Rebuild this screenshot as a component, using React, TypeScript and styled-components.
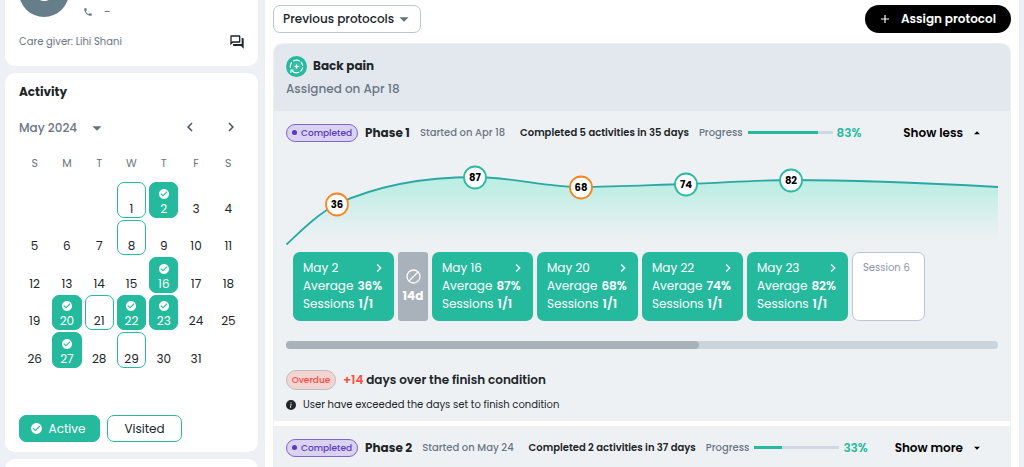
import React from "react";
import styled, { createGlobalStyle } from "styled-components";
import {
  MdAdd,
  MdArrowDropDown,
  MdArrowDropUp,
  MdCheckCircle,
  MdChevronLeft,
  MdChevronRight,
  MdOutlineForum,
  MdPhone,
} from "react-icons/md";
import { BsInfoCircleFill } from "react-icons/bs";

const color = {
  page: "#edf1f5",
  panel: "#edf1f4",
  header: "#e3e8ef",
  green: "#25b99e",
  text: "#212529",
  muted: "#6b7583",
  purple: "#5b36c9",
};

const GlobalStyle = createGlobalStyle`
  *, *::before, *::after { box-sizing: border-box; }
  body {
    margin: 0;
    background: ${color.page};
    color: ${color.text};
    font-family: Poppins, Inter, "Open Sans", sans-serif;
    font-size: 12px;
    line-height: 18px;
  }
  h2, h3, p { margin: 0; }
  button, select {
    margin: 0;
    padding: 0;
    border: 0;
    background: none;
    color: inherit;
    font: inherit;
    cursor: pointer;
  }
  svg { display: block; flex: none; }
`;

const Page = styled.div`
  display: grid;
  grid-template-columns: 253px minmax(0, 1fr);
  gap: 7px;
  min-height: 100vh;
  padding: 0 5px;
`;

const Sidebar = styled.aside`
  display: flex;
  flex-direction: column;
  gap: 7px;
`;

const Card = styled.section`
  padding: 9px 13px 10px 14px;
  border-radius: 10px;
  background: #fff;
`;

const PatientCard = styled(Card)`
  padding-top: 0;
  padding-bottom: 15px;
  border-radius: 0 0 10px 10px;
`;

const NextCard = styled(Card)`
  flex: 1;
  padding: 0;
  border-radius: 10px 10px 0 0;
`;

const PatientTop = styled.div`
  display: flex;
  align-items: flex-end;
  gap: 14px;
  height: 17px;
`;

const Avatar = styled.div`
  display: grid;
  place-items: center;
  flex: none;
  width: 50px;
  height: 50px;
  border-radius: 50%;
  background: #667d8a;
  color: #fff;
  font-size: 28px;
  font-weight: 600;
`;

const Phone = styled.div`
  display: flex;
  align-items: center;
  gap: 11px;
  color: ${color.muted};
  line-height: 10px;
`;

const CareGiver = styled.div`
  display: flex;
  align-items: center;
  justify-content: space-between;
  margin-top: 16px;
  color: ${color.muted};
  font-size: 10px;
`;

const IconButton = styled.button`
  display: grid;
  place-items: center;
  color: ${(p) => p.color || "#4d565f"};
`;

const CardTitle = styled.h2`
  font-size: 12px;
  font-weight: 700;
  line-height: 20px;
`;

const MonthBar = styled.div`
  display: flex;
  align-items: center;
  justify-content: space-between;
  margin-top: 15px;
  padding-right: 5px;
`;

const MonthNav = styled.div`
  display: flex;
  gap: 23px;
`;

const SelectBox = styled.div<{ $outlined?: boolean }>`
  display: grid;
  align-items: center;
  width: ${(p) => (p.$outlined ? "148px" : "89px")};
  height: ${(p) => (p.$outlined ? "28px" : "20px")};
  padding: ${(p) => (p.$outlined ? "0 5px 0 9px" : "0")};
  border: ${(p) => (p.$outlined ? "1px solid #bcc6cb" : "0")};
  border-radius: 7px;
  color: ${(p) => (p.$outlined ? color.text : color.muted)};
  font-weight: 500;

  select, svg { grid-area: 1 / 1; }
  select { appearance: none; width: 100%; outline-offset: 3px; }
  svg { justify-self: end; color: #66727c; pointer-events: none; }
`;

const Weekdays = styled.div`
  display: grid;
  grid-template-columns: repeat(7, 1fr);
  column-gap: 3px;
  margin: 17px 0 10px;
  padding: 0 2px 0 1px;
  color: ${color.muted};
  font-size: 11px;
  text-align: center;
`;

const Days = styled.div`
  display: grid;
  grid-template-columns: repeat(7, 1fr);
  grid-template-rows: repeat(5, 1fr);
  gap: 2px 3px;
  height: 186px;
  padding: 0 2px 0 1px;
`;

type Mark = "active" | "visited" | undefined;

const Day = styled.button<{ $mark: Mark }>`
  display: flex;
  flex-direction: column;
  align-items: center;
  justify-content: flex-end;
  border: 1px solid ${(p) => (p.$mark ? color.green : "transparent")};
  border-radius: 7px;
  background: ${(p) => (p.$mark === "active" ? color.green : "transparent")};
  color: ${(p) => (p.$mark === "active" ? "#fff" : color.text)};
  line-height: 17px;
`;

const Legend = styled.div`
  display: flex;
  gap: 7px;
  margin-top: 47px;
`;

const LegendButton = styled.button<{ $filled?: boolean }>`
  display: flex;
  align-items: center;
  justify-content: center;
  gap: 6px;
  width: ${(p) => (p.$filled ? "81px" : "75px")};
  height: 27px;
  padding-right: ${(p) => (p.$filled ? "4px" : "0")};
  border: 1px solid ${color.green};
  border-radius: 7px;
  background: ${(p) => (p.$filled ? color.green : "#fff")};
  color: ${(p) => (p.$filled ? "#fff" : color.text)};
`;

const Main = styled.main`
  min-width: 0;
  padding: 5px 8px 0;
  background: #fff;
`;

const Toolbar = styled.div`
  display: flex;
  align-items: center;
  justify-content: space-between;
`;

const AssignButton = styled.button`
  display: flex;
  align-items: center;
  justify-content: center;
  gap: 9px;
  width: 146px;
  height: 28px;
  padding-right: 2px;
  border-radius: 14px;
  background: #000;
  color: #fff;
  font-weight: 600;
`;

const Protocol = styled.article`
  margin-top: 10px;
  border: 1px solid ${color.panel};
  border-bottom: 0;
  border-radius: 9px 9px 0 0;
  overflow: hidden;
`;

const ProtocolHeader = styled.header`
  height: 67px;
  padding: 11px 12px;
  background: ${color.header};
  color: ${color.muted};
  font-weight: 500;
`;

const ProtocolTitle = styled.h2`
  display: flex;
  align-items: center;
  gap: 6px;
  margin-bottom: 3px;
  color: ${color.text};
  font-size: 12px;
  font-weight: 700;
  line-height: 22px;
`;

const Phase = styled.section`
  padding: 0 12px 7px;
  background: ${color.panel};

  & + & { margin-top: 5px; }
`;

const PhaseRow = styled.div`
  display: flex;
  align-items: center;
  height: 43px;
  color: ${color.muted};
  font-size: 10px;
  font-weight: 500;
  white-space: nowrap;
`;

const Badge = styled.span`
  display: flex;
  align-items: center;
  justify-content: center;
  gap: 4px;
  width: 72px;
  height: 18px;
  margin-right: 7px;
  border: 1px solid #8064d6;
  border-radius: 9px;
  background: #d9d3ef;
  color: ${color.purple};
  font-size: 9px;

  &::before {
    content: "";
    width: 5px;
    height: 5px;
    border-radius: 50%;
    background: currentColor;
  }
`;

const PhaseName = styled.h3`
  margin-right: 10px;
  color: ${color.text};
  font-size: 12px;
  font-weight: 700;
`;

const PhaseSummary = styled.span`
  margin: 0 10px 0 15px;
  color: ${color.text};
  font-weight: 600;
`;

const Track = styled.span`
  width: 85px;
  height: 3px;
  margin: 0 4px 0 5px;
  background: #cfd9e2;
`;

const Fill = styled.span`
  display: block;
  height: 3px;
  background: ${color.green};
`;

const Percent = styled.strong`
  color: ${color.green};
  font-size: 12px;
  font-weight: 600;
`;

const Toggle = styled.button`
  display: flex;
  align-items: center;
  gap: 7px;
  margin-left: auto;
  padding-right: 14px;
  color: #000;
  font-size: 12px;
  font-weight: 600;
`;

const Timeline = styled.div`
  overflow: hidden;
  padding-top: 6px;
`;

const Sessions = styled.div`
  display: flex;
  gap: 4px;
  height: 69px;
  padding-left: 7px;
`;

const SessionCard = styled.button`
  flex: none;
  width: 101px;
  padding: 7px 10px 8px;
  border-radius: 7px;
  background: ${color.green};
  color: #fff;
  text-align: left;

  strong { font-weight: 600; }
`;

const SessionLine = styled.span`
  display: flex;
  align-items: center;
  gap: 4px;
  white-space: nowrap;
`;

const SessionDate = styled(SessionLine)`
  justify-content: space-between;
  margin-right: -3px;
`;

const GapCard = styled.div`
  display: flex;
  flex: none;
  flex-direction: column;
  align-items: center;
  justify-content: center;
  gap: 3px;
  width: 30px;
  border-radius: 3px;
  background: #a9b2ba;
  color: #fff;
  font-weight: 700;
`;

const FutureCard = styled.div`
  flex: none;
  width: 73px;
  padding: 6px 10px;
  border: 1px solid #bfc6d0;
  border-radius: 7px;
  background: #fff;
  color: #8d93a8;
  font-size: 10px;
`;

const ScrollTrack = styled.div`
  height: 8px;
  margin-top: 20px;
  border-radius: 4px;
  background: #c9d4dc;
`;

const ScrollThumb = styled.div`
  width: 58%;
  height: 8px;
  border-radius: 4px;
  background: #a9b2ba;
`;

const Overdue = styled.div`
  display: flex;
  align-items: center;
  gap: 7px;
  margin-top: 21px;
  font-weight: 600;

  em { color: #ff4b3e; font-style: normal; }
`;

const OverdueBadge = styled.span`
  width: 50px;
  height: 20px;
  border: 1px solid #bdbdc0;
  border-radius: 10px;
  background: #f2d5d2;
  color: #ff4b3e;
  font-size: 9px;
  font-weight: 500;
  text-align: center;
`;

const Note = styled.p`
  display: flex;
  align-items: center;
  gap: 7px;
  margin-top: 6px;
  font-size: 10px;
`;

const marks: Record<number, Mark> = {
  1: "visited",
  2: "active",
  8: "visited",
  16: "active",
  20: "active",
  21: "visited",
  22: "active",
  23: "active",
  27: "active",
  29: "visited",
};

const points = [
  { x: 51, y: 44, value: 36 },
  { x: 189, y: 17, value: 87 },
  { x: 295, y: 27, value: 68 },
  { x: 400, y: 24, value: 74 },
  { x: 505, y: 20, value: 82 },
];

const sessions = [
  { date: "May 2", average: 36 },
  { date: "May 16", average: 87 },
  { date: "May 20", average: 68 },
  { date: "May 22", average: 74 },
  { date: "May 23", average: 82 },
];

const curve =
  "M1 84C18 68 32 54 51 44C95 24 145 17 189 17C225 17 260 27 295 27C330 27 365 25 400 24C435 23 470 20 505 20C575 20 640 23 712 27";

function ProgressChart() {
  return (
    <svg width="712" height="92" viewBox="0 0 712 92" role="img" aria-label="Session averages">
      <defs>
        <linearGradient id="area" x1="0" y1="17" x2="0" y2="81" gradientUnits="userSpaceOnUse">
          <stop offset="0" stopColor="#b5ede0" stopOpacity=".9" />
          <stop offset=".25" stopColor="#b8ede2" stopOpacity=".8" />
          <stop offset="1" stopColor="#c8eee7" stopOpacity="0" />
        </linearGradient>
      </defs>
      <path d={`${curve}V84H1Z`} fill="url(#area)" />
      <path d={curve} fill="none" stroke="#2aa8a4" strokeWidth="1.8" strokeLinecap="round" />
      {points.map((p) => (
        <g key={p.x}>
          <circle
            cx={p.x}
            cy={p.y + 0.5}
            r="11"
            fill="#fff"
            stroke={p.value < 70 ? "#f98423" : "#2dbaa2"}
            strokeWidth="1.8"
          />
          <text x={p.x} y={p.y + 4} fontSize="10" fontWeight="700" textAnchor="middle" fill="#000">
            {p.value}
          </text>
        </g>
      ))}
    </svg>
  );
}

function ProtocolIcon() {
  return (
    <svg width="21" height="21" viewBox="0 0 21 21" fill="none" stroke="#fff" strokeLinecap="round">
      <circle cx="10.5" cy="10.5" r="10.5" fill={color.green} stroke="none" />
      <path d="M7.6 4.9A6.2 6.2 0 0 1 13.4 4.9M15.2 6.4A6.2 6.2 0 0 1 16.6 9.4M16.6 11.8A6.2 6.2 0 0 1 14.8 15M12.8 16.3A6.2 6.2 0 0 1 6 14.8M4.4 11.4A6.2 6.2 0 0 1 5.5 6.7" strokeWidth="1.2" />
      <path d="M4.9 16.4V14H7.3" strokeWidth="1.1" />
      <circle cx="10.5" cy="10.5" r="3.6" strokeWidth=".4" opacity=".4" />
      <path d="M10.5 9V12M9 10.5H12" strokeWidth="1.5" />
    </svg>
  );
}

function SkipIcon() {
  return (
    <svg width="15" height="15" viewBox="0 0 15 15" fill="none" stroke="#fff" strokeWidth="1.3">
      <circle cx="7.5" cy="7.5" r="6.5" />
      <path d="M3 12L12 3" />
    </svg>
  );
}

type PhaseHeadProps = {
  name: string;
  started: string;
  summary: string;
  progress: number;
  open?: boolean;
};

function PhaseHead({ name, started, summary, progress, open }: PhaseHeadProps) {
  return (
    <PhaseRow>
      <Badge>Completed</Badge>
      <PhaseName>{name}</PhaseName>
      <span>Started on {started}</span>
      <PhaseSummary>{summary}</PhaseSummary>
      <span>Progress</span>
      <Track>
        <Fill style={{ width: `${progress}%` }} />
      </Track>
      <Percent>{progress}%</Percent>
      <Toggle aria-expanded={!!open}>
        {open ? "Show less" : "Show more"}
        {open ? <MdArrowDropUp size={14} /> : <MdArrowDropDown size={14} />}
      </Toggle>
    </PhaseRow>
  );
}

export default function App() {
  return (
    <>
      <GlobalStyle />
      <Page>
        <Sidebar>
          <PatientCard>
            <PatientTop>
              <Avatar>S</Avatar>
              <Phone>
                <MdPhone size={10} />
                <span>-</span>
              </Phone>
            </PatientTop>
            <CareGiver>
              <span>Care giver: Lihi Shani</span>
              <IconButton aria-label="Messages" color="#212529">
                <MdOutlineForum size={16} />
              </IconButton>
            </CareGiver>
          </PatientCard>

          <Card>
            <CardTitle>Activity</CardTitle>
            <MonthBar>
              <SelectBox>
                <select aria-label="Month" defaultValue="May 2024">
                  <option>May 2024</option>
                </select>
                <MdArrowDropDown size={22} />
              </SelectBox>
              <MonthNav>
                <IconButton aria-label="Previous month">
                  <MdChevronLeft size={18} />
                </IconButton>
                <IconButton aria-label="Next month">
                  <MdChevronRight size={18} />
                </IconButton>
              </MonthNav>
            </MonthBar>
            <Weekdays>
              {["S", "M", "T", "W", "T", "F", "S"].map((d, i) => (
                <span key={i}>{d}</span>
              ))}
            </Weekdays>
            <Days>
              {Array.from({ length: 31 }, (_, i) => i + 1).map((n) => (
                <Day key={n} $mark={marks[n]} style={n === 1 ? { gridColumnStart: 4 } : undefined}>
                  {marks[n] === "active" && <MdCheckCircle size={12} />}
                  {n}
                </Day>
              ))}
            </Days>
            <Legend>
              <LegendButton $filled>
                <MdCheckCircle size={13} />
                Active
              </LegendButton>
              <LegendButton>Visited</LegendButton>
            </Legend>
          </Card>

          <NextCard />
        </Sidebar>

        <Main>
          <Toolbar>
            <SelectBox $outlined>
              <select aria-label="Protocols" defaultValue="Previous protocols">
                <option>Previous protocols</option>
              </select>
              <MdArrowDropDown size={22} />
            </SelectBox>
            <AssignButton>
              <MdAdd size={14} />
              Assign protocol
            </AssignButton>
          </Toolbar>

          <Protocol>
            <ProtocolHeader>
              <ProtocolTitle>
                <ProtocolIcon />
                Back pain
              </ProtocolTitle>
              Assigned on Apr 18
            </ProtocolHeader>

            <Phase>
              <PhaseHead
                name="Phase 1"
                started="Apr 18"
                summary="Completed 5 activities in 35 days"
                progress={83}
                open
              />
              <Timeline>
                <ProgressChart />
                <Sessions>
                  {sessions.map((s, i) => (
                    <React.Fragment key={s.date}>
                      {i === 1 && (
                        <GapCard>
                          <SkipIcon />
                          14d
                        </GapCard>
                      )}
                      <SessionCard>
                        <SessionDate>
                          {s.date}
                          <MdChevronRight size={16} />
                        </SessionDate>
                        <SessionLine>
                          Average <strong>{s.average}%</strong>
                        </SessionLine>
                        <SessionLine>
                          Sessions <strong>1/1</strong>
                        </SessionLine>
                      </SessionCard>
                    </React.Fragment>
                  ))}
                  <FutureCard>Session 6</FutureCard>
                </Sessions>
              </Timeline>
              <ScrollTrack>
                <ScrollThumb />
              </ScrollTrack>
              <Overdue>
                <OverdueBadge>Overdue</OverdueBadge>
                <span>
                  <em>+14</em> days over the finish condition
                </span>
              </Overdue>
              <Note>
                <BsInfoCircleFill size={10} />
                User have exceeded the days set to finish condition
              </Note>
            </Phase>

            <Phase>
              <PhaseHead
                name="Phase 2"
                started="May 24"
                summary="Completed 2 activities in 37 days"
                progress={33}
              />
            </Phase>
          </Protocol>
        </Main>
      </Page>
    </>
  );
}
